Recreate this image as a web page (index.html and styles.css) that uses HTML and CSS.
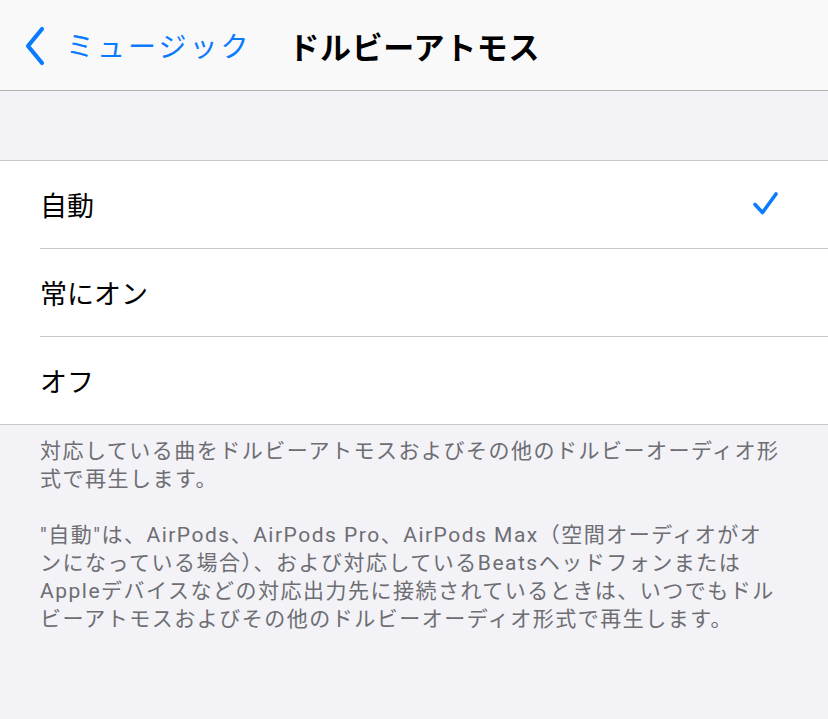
FILE: index.html
```html
<!DOCTYPE html>
<html>
<head>
  <meta name="viewport" content="width=device-width">
  <title>ドルビーアトモス</title>
  <link rel="stylesheet" href="styles.css">
</head>
<body>
<div class="nav">
  <div class="back">
    <svg class="chev" width="24" height="40" viewBox="0 0 24 40">
      <path d="M19 3 L5 20 L19 37" fill="none" stroke="#0a7aff" stroke-width="4.2" stroke-linecap="round" stroke-linejoin="round"/>
    </svg>
    <span>ミュージック</span>
  </div>
  <div class="title">ドルビーアトモス</div>
</div>

<div class="gap"></div>

<div class="list">
  <div class="row"><span>自動</span>
    <svg class="check" width="28" height="26" viewBox="0 0 28 26">
      <path d="M3 13.5 L10.5 21.5 L24 3" fill="none" stroke="#0a7aff" stroke-width="3.6" stroke-linecap="round" stroke-linejoin="round"/>
    </svg>
  </div>
  <div class="row"><span>常にオン</span></div>
  <div class="row last"><span>オフ</span></div>
</div>

<div class="foot">
  <p>対応している曲をドルビーアトモスおよびその他のドルビーオーディオ形<br>式で再生します。</p>
  <p>"自動"は、AirPods、AirPods Pro、AirPods Max（空間オーディオがオ<br>ンになっている場合）、および対応しているBeatsヘッドフォンまたは<br>Appleデバイスなどの対応出力先に接続されているときは、いつでもドル<br>ビーアトモスおよびその他のドルビーオーディオ形式で再生します。</p>
</div>
</body>
</html>
```

FILE: styles.css
```css
body {
  margin: 0;
  background: #f2f2f7;
  font-family: "Noto Sans CJK JP", Roboto, "Noto Sans", sans-serif;
  color: #000;
}
.nav {
  height: 90px;
  background: #f9f9fa;
  border-bottom: 1px solid #b2b2b5;
  display: flex;
  align-items: center;
}
.back {
  display: flex;
  align-items: center;
  color: #0a7aff;
  font-size: 28px;
  letter-spacing: 3px;
  padding-left: 23px;
  gap: 19px;
}
.chev { margin-top: 1px; }
.title {
  font-size: 31px;
  font-weight: 700;
  margin-left: 37px;
  letter-spacing: 0.6px;
}
.gap { height: 69px; }
.list {
  background: #fff;
  border-top: 1px solid #c8c8cc;
  border-bottom: 1px solid #c8c8cc;
  padding-left: 40px;
}
.row {
  height: 87px;
  display: flex;
  align-items: center;
  justify-content: space-between;
  border-bottom: 1px solid #c8c8cc;
  font-size: 27px;
  padding-right: 48px;
}
.row.last { border-bottom: none; }
.check { margin-top: -2px; }
.foot {
  padding: 12px 0 0 40px;
  color: #6d6d72;
  font-family: Roboto, "Noto Sans CJK JP", sans-serif;
  font-size: 21px;
  line-height: 28px;
  letter-spacing: 1.5px;
  white-space: nowrap;
}
.foot p { margin: 0 0 28px 0; }
```
